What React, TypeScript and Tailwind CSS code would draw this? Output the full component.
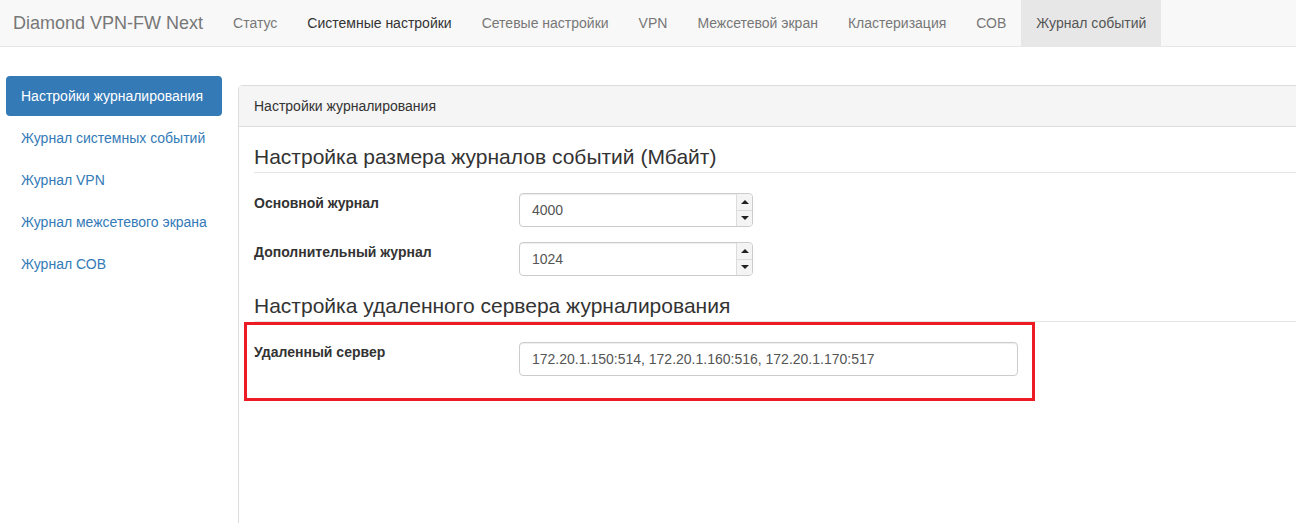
const navItems = [
  { label: "Статус" },
  { label: "Системные настройки", dark: true },
  { label: "Сетевые настройки" },
  { label: "VPN" },
  { label: "Межсетевой экран" },
  { label: "Кластеризация" },
  { label: "СОВ" },
  { label: "Журнал событий", active: true },
];

const sideItems = [
  "Журнал системных событий",
  "Журнал VPN",
  "Журнал межсетевого экрана",
  "Журнал СОВ",
];

function SpinInput({ value }: { value: string }) {
  return (
    <div className="flex h-[34px] w-[234px] overflow-hidden rounded border border-[#ccc] bg-white shadow-[inset_0_1px_1px_rgba(0,0,0,0.075)]">
      <div className="flex flex-1 items-center px-3 text-sm text-[#555]">{value}</div>
      <div className="flex w-[16px] flex-col border-l border-[#dcdcdc] bg-[#f4f4f4]">
        <div className="flex flex-1 items-center justify-center border-b border-[#dcdcdc]">
          <span className="h-0 w-0 border-x-[4px] border-b-[4px] border-x-transparent border-b-[#222]" />
        </div>
        <div className="flex flex-1 items-center justify-center">
          <span className="h-0 w-0 border-x-[4px] border-t-[4px] border-x-transparent border-t-[#222]" />
        </div>
      </div>
    </div>
  );
}

function Legend({ children }: { children: React.ReactNode }) {
  return (
    <div className="mb-5 border-b border-[#e5e5e5] text-[21px] leading-[30px] text-[#333]">
      {children}
    </div>
  );
}

function Row({ label, children }: { label: string; children: React.ReactNode }) {
  return (
    <div className="mb-[15px] flex">
      <div className="w-[265px] text-sm leading-5 font-bold text-[#333]">{label}</div>
      {children}
    </div>
  );
}

export default function App() {
  return (
    <div
      className="relative h-[523px] w-full overflow-hidden bg-white text-sm text-[#333]"
      style={{ fontFamily: '"Liberation Sans", Arial, sans-serif' }}
    >
      {/* Top navbar */}
      <nav className="flex h-[47px] border-b border-[#e7e7e7] bg-[#f8f8f8]">
        <div className="flex items-center pr-[15px] pl-[13px] text-lg text-[#777]">
          Diamond VPN-FW Next
        </div>
        <ul className="flex">
          {navItems.map((it) => (
            <li
              key={it.label}
              className={
                it.active
                  ? "flex items-center bg-[#e7e7e7] px-[15px] text-[#555]"
                  : it.dark
                    ? "flex items-center px-[15px] text-[#333]"
                    : "flex items-center px-[15px] text-[#777]"
              }
            >
              {it.label}
            </li>
          ))}
        </ul>
      </nav>

      <div className="flex">
        {/* Sidebar */}
        <ul className="mt-[29px] ml-[6px] w-[216px]">
          <li className="rounded bg-[#337ab7] px-[15px] py-[10px] leading-5 text-white">
            Настройки журналирования
          </li>
          {sideItems.map((s) => (
            <li key={s} className="mt-[2px] px-[15px] py-[10px] leading-5 text-[#337ab7]">
              {s}
            </li>
          ))}
        </ul>

        {/* Panel */}
        <div className="mt-[38px] mr-[-30px] ml-[16px] h-[500px] flex-1 rounded-tl border border-[#ddd] bg-white">
          <div className="border-b border-[#ddd] bg-[#f5f5f5] px-[15px] py-[10px] leading-5 text-[#333]">
            Настройки журналирования
          </div>
          <div className="p-[15px]">
            <Legend>Настройка размера журналов событий (Мбайт)</Legend>
            <Row label="Основной журнал">
              <SpinInput value="4000" />
            </Row>
            <Row label="Дополнительный журнал">
              <SpinInput value="1024" />
            </Row>
            <Legend>Настройка удаленного сервера журналирования</Legend>
            <Row label="Удаленный сервер">
              <div className="flex h-[34px] w-[499px] items-center rounded border border-[#ccc] bg-white px-3 text-sm text-[#555] shadow-[inset_0_1px_1px_rgba(0,0,0,0.075)]">
                172.20.1.150:514, 172.20.1.160:516, 172.20.1.170:517
              </div>
            </Row>
          </div>
        </div>
      </div>

      {/* Red highlight annotation */}
      <div className="pointer-events-none absolute top-[322px] left-[244px] h-[79px] w-[791px] border-[3px] border-[#ed1c24]" />
    </div>
  );
}
